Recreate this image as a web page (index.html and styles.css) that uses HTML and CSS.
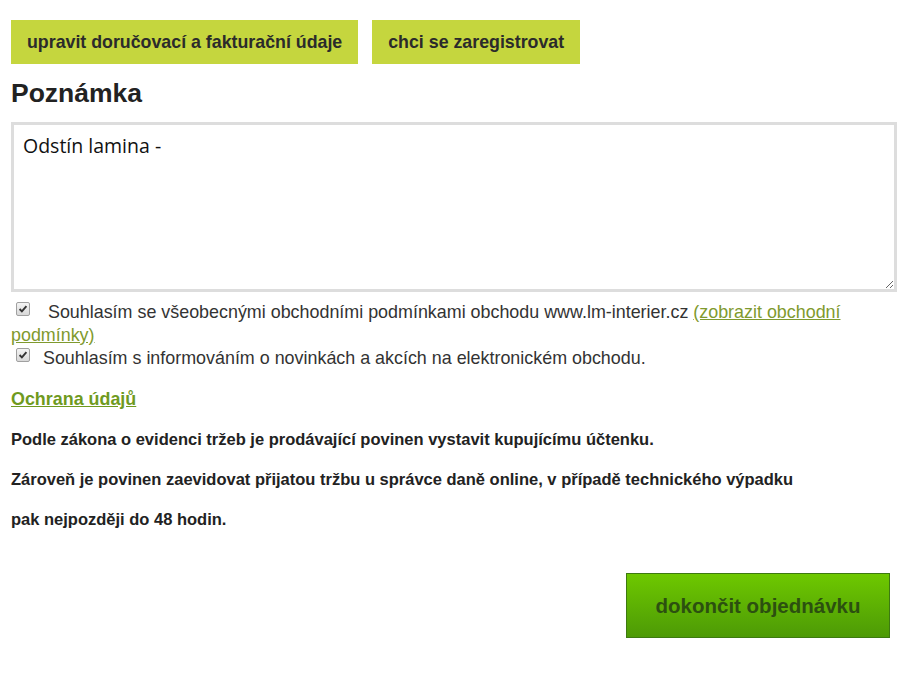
FILE: index.html
```html
<!DOCTYPE html>
<html lang="cs">
<head>
    <meta charset="UTF-8">
    <meta name="viewport" content="width=device-width, initial-scale=1.0">
    <title>Objednávka</title>
    <link rel="stylesheet" href="styles.css">
</head>
<body>
    <div class="page">
        <div class="top-buttons">
            <a class="btn-light" href="#">upravit doručovací a fakturační údaje</a>
            <a class="btn-light" href="#">chci se zaregistrovat</a>
        </div>

        <h2>Poznámka</h2>
        <textarea class="note">Odstín lamina -</textarea>

        <div class="agree first">
            <input type="checkbox" id="terms" checked>
            <label for="terms">&nbsp;Souhlasím se všeobecnými obchodními podmínkami obchodu www.lm-interier.cz <a href="#">(zobrazit obchodní podmínky)</a></label>
        </div>
        <div class="agree">
            <input type="checkbox" id="news" checked>
            <label for="news">Souhlasím s informováním o novinkách a akcích na elektronickém obchodu.</label>
        </div>

        <p class="privacy"><a href="#">Ochrana údajů</a></p>

        <p class="eet">Podle zákona o evidenci tržeb je prodávající povinen vystavit kupujícímu účtenku.</p>
        <p class="eet">Zároveň je povinen zaevidovat přijatou tržbu u správce daně online, v případě technického výpadku</p>
        <p class="eet">pak nejpozději do 48 hodin.</p>

        <div class="submit-row">
            <button class="btn-finish">dokončit objednávku</button>
        </div>
    </div>
</body>
</html>
```

FILE: styles.css
```css
body {
    margin: 0;
    font-family: Arial, "Liberation Sans", sans-serif;
    color: #333;
    background: #fff;
}
.page {
    padding: 20px 7px 0 11px;
}
.top-buttons {
    display: flex;
    gap: 14px;
}
.btn-light {
    display: block;
    height: 44px;
    line-height: 44px;
    padding: 0 16px;
    background: #c5d63e;
    color: #2b2b2b;
    font-size: 17.8px;
    font-weight: bold;
    text-decoration: none;
}
h2 {
    margin: 14px 0 14px;
    font-size: 26.5px;
    line-height: 30px;
    color: #222;
}
.note {
    display: block;
    box-sizing: border-box;
    width: 886px;
    height: 170px;
    margin: 0;
    padding: 7px 9px;
    border: 3px solid #ddd;
    font-family: "Open Sans", "DejaVu Sans", sans-serif;
    font-size: 19.5px;
    line-height: 28px;
    color: #111;
    resize: vertical;
}
.agree {
    font-size: 17.9px;
    line-height: 23px;
    color: #333;
}
.agree.first {
    margin-top: 9px;
}
.agree input {
    appearance: none;
    -webkit-appearance: none;
    width: 14px;
    height: 14px;
    margin: 0 8px 0 5px;
    border: 1px solid #a0a0a0;
    border-radius: 2px;
    vertical-align: 2px;
    background: url("data:image/svg+xml;utf8,<svg xmlns='http://www.w3.org/2000/svg' viewBox='0 0 14 14'><path d='M3 7 L5.7 9.8 L11 3.6' fill='none' stroke='%23333' stroke-width='2.2'/></svg>") no-repeat center, linear-gradient(#f4f4f4, #d8d8d8);
}
.agree a {
    color: #7f9a2e;
}
.privacy {
    margin: 19px 0 0;
    font-size: 17.9px;
    font-weight: bold;
}
.privacy a {
    color: #6f9a1e;
}
.eet {
    margin: 20px 0 0;
    font-size: 16.5px;
    font-weight: bold;
    line-height: 20px;
    color: #222;
}
.privacy + .eet {
    margin-top: 19px;
}
.submit-row {
    display: flex;
    justify-content: flex-end;
    padding-right: 7px;
    margin-top: 44px;
}
.btn-finish {
    width: 264px;
    height: 65px;
    border: 1px solid #3d7a10;
    background: linear-gradient(#6ec800, #4d9a06);
    color: #2c5010;
    font-family: Arial, "Liberation Sans", sans-serif;
    font-size: 20.5px;
    font-weight: bold;
    cursor: pointer;
}
```
